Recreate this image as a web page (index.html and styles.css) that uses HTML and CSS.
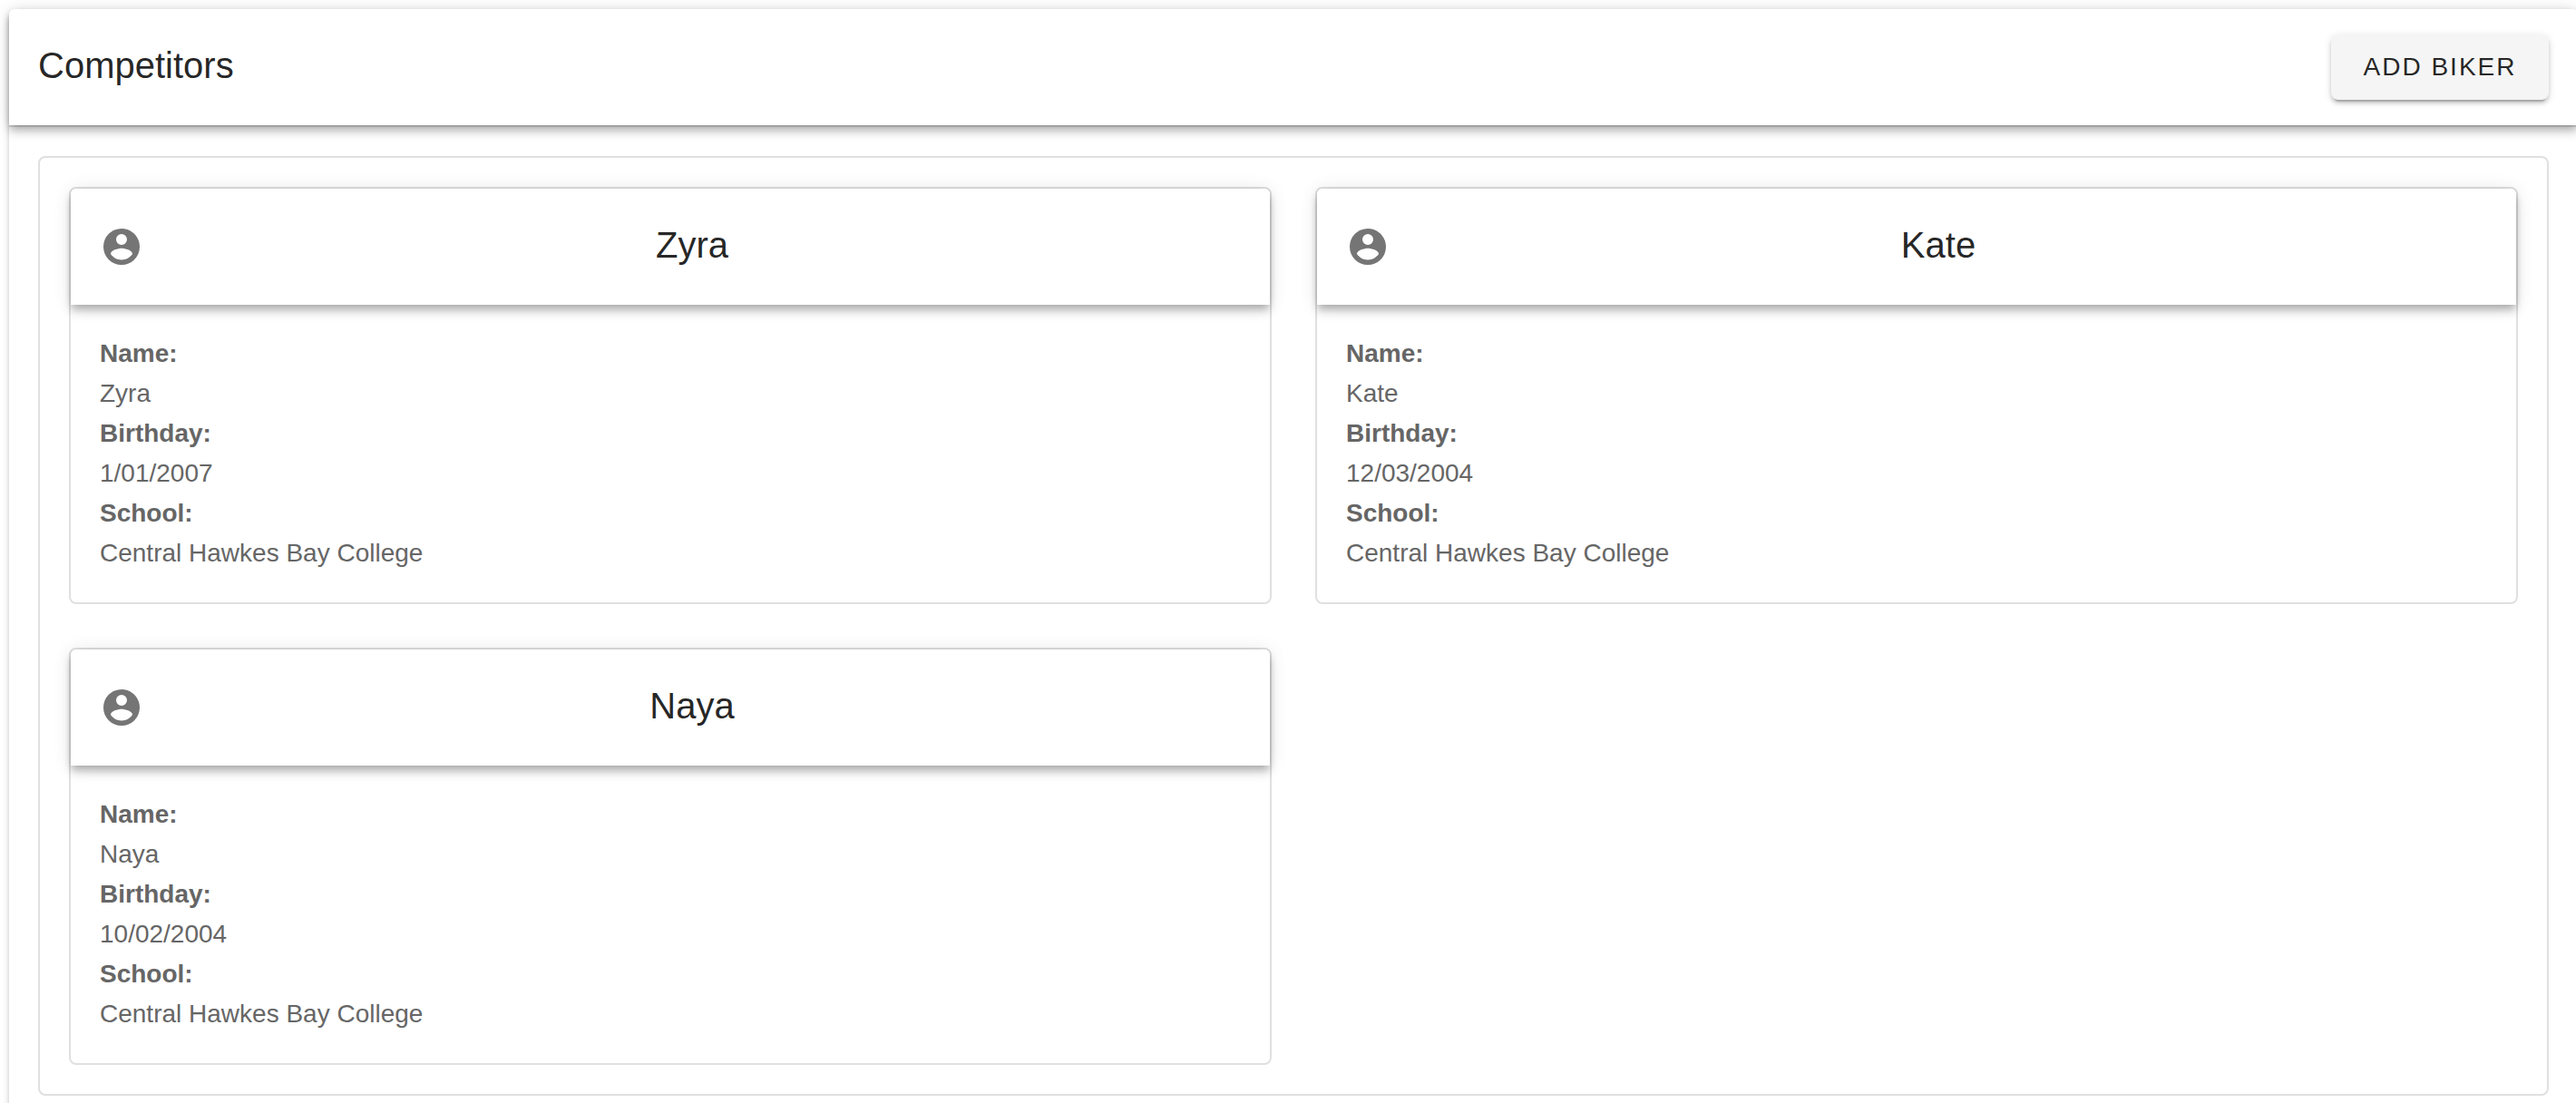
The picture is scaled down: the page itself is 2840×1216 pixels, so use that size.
FILE: index.html
```html
<!DOCTYPE html>
<html lang="en">
<head>
  <meta charset="utf-8">
  <meta name="viewport" content="width=device-width, initial-scale=1">
  <title>Competitors</title>
  <link rel="stylesheet" href="styles.css">
</head>
<body>
  <svg width="0" height="0" class="sprite" aria-hidden="true">
    <symbol id="account" viewBox="0 0 24 24">
      <path d="M12,19.2C9.5,19.2 7.29,17.92 6,16C6.03,14 10,12.9 12,12.9C14,12.9 17.97,14 18,16C16.71,17.92 14.5,19.2 12,19.2M12,5A3,3 0 0,1 15,8A3,3 0 0,1 12,11A3,3 0 0,1 9,8A3,3 0 0,1 12,5M12,2A10,10 0 0,0 2,12A10,10 0 0,0 12,22A10,10 0 0,0 22,12C22,6.47 17.5,2 12,2Z"/>
    </symbol>
  </svg>
  <main class="sheet">
    <header class="toolbar">
      <h1 class="title">Competitors</h1>
      <button type="button" class="button">Add biker</button>
    </header>
    <hr class="divider">
    <div class="content">
      <section class="outlined grid">
        <article class="outlined">
          <header class="toolbar">
            <svg class="icon" aria-hidden="true"><use href="#account"/></svg>
            <h2 class="title title-center">Zyra</h2>
          </header>
          <dl class="details">
            <dt>Name:</dt><dd>Zyra</dd>
            <dt>Birthday:</dt><dd>1/01/2007</dd>
            <dt>School:</dt><dd>Central Hawkes Bay College</dd>
          </dl>
        </article>
        <article class="outlined">
          <header class="toolbar">
            <svg class="icon" aria-hidden="true"><use href="#account"/></svg>
            <h2 class="title title-center">Kate</h2>
          </header>
          <dl class="details">
            <dt>Name:</dt><dd>Kate</dd>
            <dt>Birthday:</dt><dd>12/03/2004</dd>
            <dt>School:</dt><dd>Central Hawkes Bay College</dd>
          </dl>
        </article>
        <article class="outlined">
          <header class="toolbar">
            <svg class="icon" aria-hidden="true"><use href="#account"/></svg>
            <h2 class="title title-center">Naya</h2>
          </header>
          <dl class="details">
            <dt>Name:</dt><dd>Naya</dd>
            <dt>Birthday:</dt><dd>10/02/2004</dd>
            <dt>School:</dt><dd>Central Hawkes Bay College</dd>
          </dl>
        </article>
      </section>
    </div>
  </main>
</body>
</html>
```
FILE: styles.css
```css
* {
  box-sizing: border-box;
}

body {
  margin: 0;
  padding: 10px 0 0 10px;
  height: 100vh;
  overflow: hidden;
  background: #fff;
  color: rgba(0, 0, 0, 0.87);
  font-family: Helvetica, "Liberation Sans", Arial, sans-serif;
  font-size: 28px;
  line-height: 44px;
}

.sprite {
  display: none;
}

/* The sheet runs just past the right edge of the window */
.sheet {
  margin-right: -2px;
  border-radius: 8px;
  background: #fff;
  box-shadow:
    0 6px 2px -4px rgba(0, 0, 0, 0.2),
    0 4px 4px 0 rgba(0, 0, 0, 0.14),
    0 2px 10px 0 rgba(0, 0, 0, 0.12);
}

.toolbar {
  display: flex;
  align-items: center;
  height: 128px;
  padding: 0 32px;
  border-radius: 6px 6px 0 0;
  background: #fff;
  box-shadow:
    0 4px 8px -2px rgba(0, 0, 0, 0.2),
    0 8px 10px 0 rgba(0, 0, 0, 0.14),
    0 2px 20px 0 rgba(0, 0, 0, 0.12);
}

.title {
  flex: 1;
  margin: 0;
  padding-bottom: 4px;
  font-size: 40px;
  font-weight: 400;
  line-height: 60px;
}

.title-center {
  text-align: center;
}

.button {
  min-width: 240px;
  height: 72px;
  padding: 0 32px;
  border: 0;
  border-radius: 8px;
  background: #f5f5f5;
  color: inherit;
  font: inherit;
  letter-spacing: 2px;
  text-transform: uppercase;
  cursor: pointer;
  box-shadow:
    0 6px 2px -4px rgba(0, 0, 0, 0.2),
    0 4px 4px 0 rgba(0, 0, 0, 0.14),
    0 2px 10px 0 rgba(0, 0, 0, 0.12);
}

.divider {
  height: 2px;
  margin: 0;
  border: 0;
  background: rgba(0, 0, 0, 0.12);
}

.content {
  padding: 32px;
}

.outlined {
  border: 2px solid #e0e0e0;
  border-radius: 8px;
}

.grid {
  display: grid;
  grid-template-columns: 1fr 1fr;
  gap: 48px;
  padding: 32px;
}

.icon {
  width: 48px;
  height: 48px;
  fill: #757575;
}

.details {
  margin: 0;
  padding: 32px;
  color: #666;
}

.details dt {
  font-weight: 700;
}

.details dd {
  margin: 0;
}
```
